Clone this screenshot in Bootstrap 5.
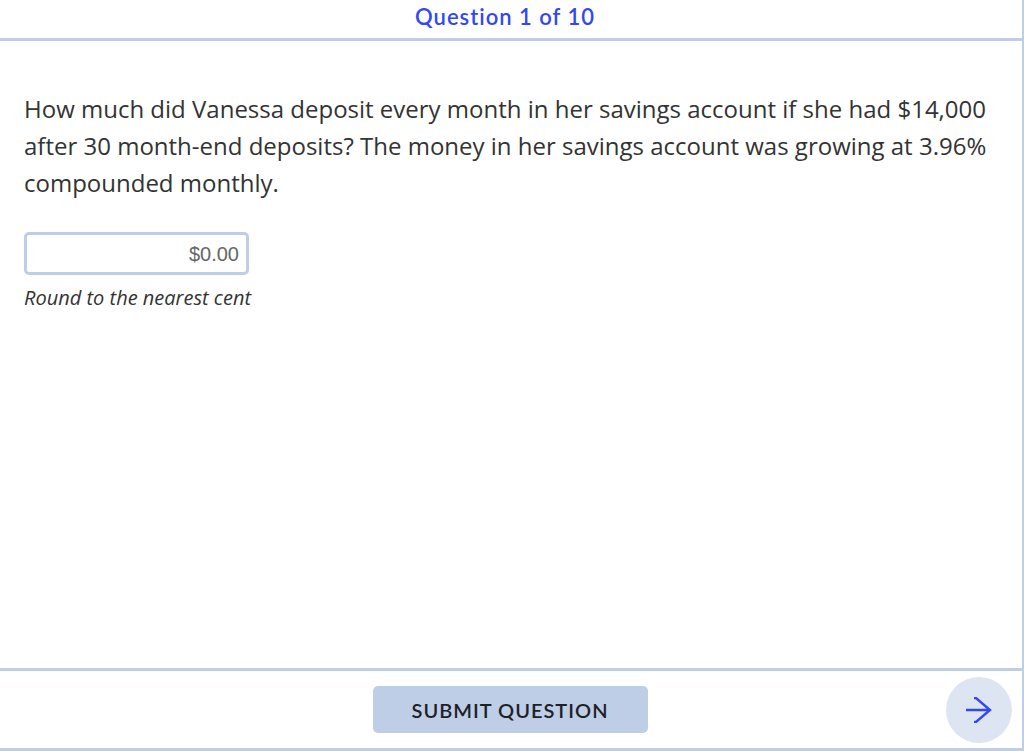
<!DOCTYPE html>
<html lang="en">
<head>
<meta charset="utf-8">
<meta name="viewport" content="width=device-width, initial-scale=1">
<title>Question 1 of 10</title>
<link href="https://cdn.jsdelivr.net/npm/bootstrap@5.3.0/dist/css/bootstrap.min.css" rel="stylesheet">
<style>
  :root { --line: #bfcee7; --accent: #3347f8; }
  body { font-family: "Open Sans", "Noto Sans", sans-serif; color: #333; }
  .quiz { border-right: 2px solid var(--line); border-bottom: 3px solid var(--line); }
  .quiz-head { height: 41px; border-bottom: 3px solid var(--line); padding-right: 12px; }
  .quiz-title { font: 600 22px/34px Lato, sans-serif; letter-spacing: 1px; color: var(--accent); }
  .quiz-body { padding: 49px 24px 24px; }
  .prompt { font-size: 24px; line-height: 37px; margin-bottom: 31px; }
  .answer { width: 225px; height: 43px; border: 3px solid var(--line); border-radius: 5px; font: 20px/24px "Liberation Sans", Arial, sans-serif; padding: 1px 7px 0; }
  .answer::placeholder { color: #666; }
  .hint { font-size: 20px; line-height: 28px; margin-top: 9px; }
  .quiz-foot { height: 80px; border-top: 3px solid var(--line); padding-right: 10px; padding-left: 8px; }
  .submit { width: 275px; height: 47px; border-radius: 5px; background: var(--line); color: #1d2126; font: 600 20px/24px Lato, sans-serif; letter-spacing: 1px; }
  .next { width: 66px; height: 66px; background: #dde5f2; color: var(--accent); }
</style>
</head>
<body>
<div class="quiz min-vh-100 d-flex flex-column">
  <header class="quiz-head text-center">
    <h1 class="quiz-title m-0">Question 1 of 10</h1>
  </header>
  <main class="quiz-body flex-grow-1">
    <p class="prompt">How much did Vanessa deposit every month in her savings account if she had $14,000 after 30 month-end deposits? The money in her savings account was growing at 3.96% compounded monthly.</p>
    <input class="answer form-control text-end" type="text" placeholder="$0.00" aria-label="Monthly deposit" aria-describedby="hint">
    <p class="hint fst-italic mb-0" id="hint">Round to the nearest cent</p>
  </main>
  <footer class="quiz-foot row g-0 align-items-center">
    <div class="col"></div>
    <div class="col-auto"><button class="submit btn p-0 border-0" type="submit">SUBMIT QUESTION</button></div>
    <div class="col d-flex justify-content-end">
      <button class="next btn rounded-circle p-0 border-0 d-flex align-items-center justify-content-center" type="button" aria-label="Next question">
        <svg width="28" height="26" viewBox="0 0 28 26" fill="none" stroke="currentColor" stroke-width="2.4"><path d="M1 13H25M9 1H11L25 13L11 25H9"/></svg>
      </button>
    </div>
  </footer>
</div>
<script src="https://cdn.jsdelivr.net/npm/bootstrap@5.3.0/dist/js/bootstrap.bundle.min.js"></script>
</body>
</html>
